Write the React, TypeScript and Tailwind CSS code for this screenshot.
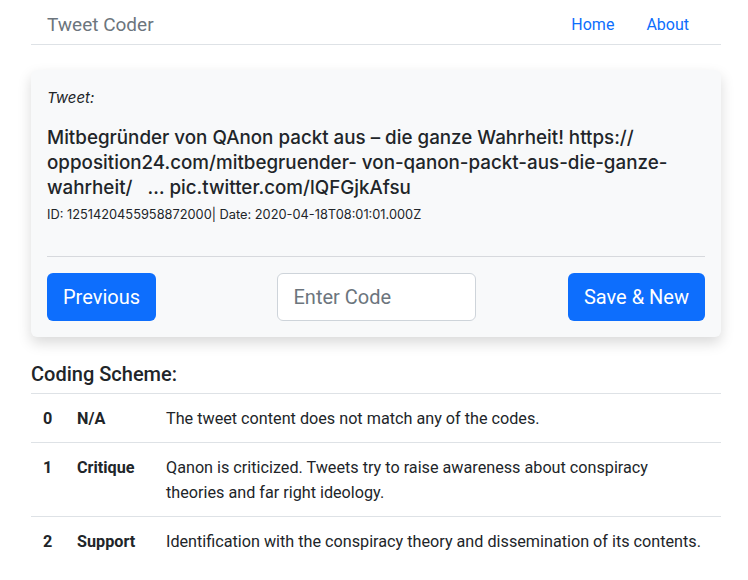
import React from 'react';

const CODES = [
  { code: '0', name: 'N/A', desc: 'The tweet content does not match any of the codes.' },
  {
    code: '1',
    name: 'Critique',
    desc: 'Qanon is criticized. Tweets try to raise awareness about conspiracy theories and far right ideology.',
  },
  { code: '2', name: 'Support', desc: 'Identification with the conspiracy theory and dissemination of its contents.' },
];

export default function App() {
  return (
    <div className="min-h-screen bg-white font-['Roboto',sans-serif] text-[#212529]">
      <div className="ml-[31px] w-[690px]">
        <nav className="flex h-[45px] items-center justify-between border-b border-[#dee2e6] pl-4 pr-8 pt-[6px]">
          <span className="text-[19px] text-[#6c757d]">Tweet Coder</span>
          <div className="flex gap-8 text-[16px] text-[#0d6efd]">
            <a href="#">Home</a>
            <a href="#">About</a>
          </div>
        </nav>

        <div className="mt-[25px] rounded-md bg-[#f8f9fa] p-4 shadow-[0_6px_14px_rgba(0,0,0,0.15)]">
          <p className="mt-[1px] font-['Inter',sans-serif] text-[15px] italic">Tweet:</p>
          <p className="mt-[15px] font-['Inter',sans-serif] text-[18.8px] font-medium leading-[25px]">
            Mitbegründer von QAnon packt aus – die ganze Wahrheit! https://
            <br />
            opposition24.com/mitbegruender- von-qanon-packt-aus-die-ganze-
            <br />
            <span className="whitespace-pre">wahrheit/   … pic.twitter.com/lQFGjkAfsu</span>
          </p>
          <p className="mt-[5px] font-['Inter',sans-serif] text-[12.8px]">
            ID: 1251420455958872000| Date: 2020-04-18T08:01:01.000Z
          </p>
          <hr className="mt-[32px] border-[#d7d9dd]" />
          <div className="mt-4 grid grid-cols-[1fr_auto_1fr] items-center">
            <button className="h-12 justify-self-start rounded-md bg-[#0d6efd] px-4 text-[20px] text-white">
              Previous
            </button>
            <input
              placeholder="Enter Code"
              className="h-12 w-[199px] rounded-md border border-[#ced4da] bg-white px-4 text-[20px] placeholder:text-[#6c757d]"
            />
            <button className="h-12 justify-self-end rounded-md bg-[#0d6efd] px-4 text-[20px] text-white">
              Save &amp; New
            </button>
          </div>
        </div>

        <h5 className="mt-[22px] text-[20px] font-medium">Coding Scheme:</h5>
        <table className="mt-[4px] w-full border-t border-[#dee2e6] text-[16.2px]">
          <tbody>
            {CODES.map((c) => (
              <tr key={c.code} className="border-b border-[#dee2e6] last:border-b-0 align-top">
                <td className="w-[46px] pb-[11px] pl-3 pt-3 font-bold leading-[25px]">{c.code}</td>
                <td className="w-[89px] pb-[11px] pt-3 font-bold leading-[25px]">{c.name}</td>
                <td className="pb-[11px] pr-3 pt-3 leading-[25px]">{c.desc}</td>
              </tr>
            ))}
          </tbody>
        </table>
      </div>
    </div>
  );
}
